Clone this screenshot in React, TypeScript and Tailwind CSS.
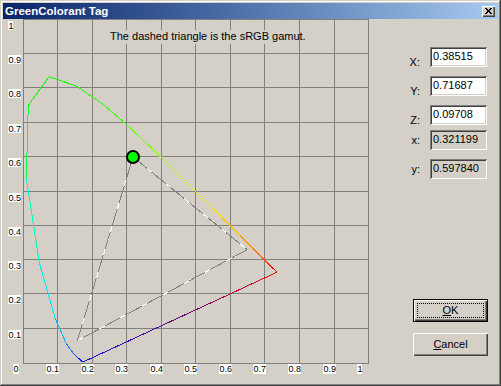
const GRID_X = [23, 57, 92, 126, 161, 195, 230, 264, 299, 334, 368];
const GRID_Y = [363, 328, 293, 259, 225, 191, 156, 122, 87, 53, 19];

// CIE 1931 spectral locus, 10nm steps
const LOCUS: [number, number, number][] = [
  [380, 0.1741, 0.005],
  [390, 0.1738, 0.0049],
  [400, 0.1733, 0.0048],
  [410, 0.1726, 0.0048],
  [420, 0.1714, 0.0051],
  [430, 0.1689, 0.0069],
  [440, 0.1644, 0.0109],
  [450, 0.1566, 0.0177],
  [460, 0.144, 0.0297],
  [470, 0.1241, 0.0578],
  [480, 0.0913, 0.1327],
  [490, 0.0454, 0.295],
  [500, 0.0082, 0.5384],
  [510, 0.0139, 0.7502],
  [520, 0.0743, 0.8338],
  [530, 0.1547, 0.8059],
  [540, 0.2296, 0.7543],
  [550, 0.3016, 0.6923],
  [560, 0.3731, 0.6245],
  [570, 0.4441, 0.5547],
  [580, 0.5125, 0.4866],
  [590, 0.5752, 0.4242],
  [600, 0.627, 0.3725],
  [610, 0.6658, 0.334],
  [620, 0.6915, 0.3083],
  [630, 0.7079, 0.292],
  [640, 0.719, 0.2809],
  [650, 0.726, 0.274],
  [660, 0.73, 0.27],
  [680, 0.7334, 0.2666],
  [700, 0.7347, 0.2653],
];

const px = (x: number) => 23.5 + x * 345;
const py = (y: number) => 363.5 - y * 344;

function wlColor(w: number) {
  let r = 0,
    g = 0,
    b = 0;
  if (w < 440) b = 1;
  else if (w < 490) {
    g = (w - 440) / 50;
    b = 1;
  } else if (w < 510) {
    g = 1;
    b = (510 - w) / 20;
  } else if (w < 580) {
    r = Math.pow((w - 510) / 70, 2);
    g = 1;
  } else if (w < 645) {
    r = 1;
    g = (645 - w) / 65;
  } else r = 1;
  return `rgb(${Math.round(r * 255)},${Math.round(g * 255)},${Math.round(b * 255)})`;
}

const SRGB = {
  r: [px(0.6484), py(0.3309)],
  g: [133, 157],
  b: [px(0.1559), py(0.066)],
};

const labelFont = "'Liberation Sans', Arial, sans-serif";

function Chart() {
  const tri: [number[], number[]][] = [
    [SRGB.b, SRGB.g],
    [SRGB.g, SRGB.r],
    [SRGB.r, SRGB.b],
  ];
  const first = LOCUS[0];
  const last = LOCUS[LOCUS.length - 1];
  return (
    <svg width={372} height={364} viewBox="3 19 372 364" className="block shrink-0">
      <defs>
        <linearGradient
          id="purple"
          gradientUnits="userSpaceOnUse"
          x1={px(first[1])}
          y1={py(first[2])}
          x2={px(last[1])}
          y2={py(last[2])}
        >
          <stop offset="0" stopColor="#1010e0" />
          <stop offset="0.5" stopColor="#600080" />
          <stop offset="1" stopColor="#ff0000" />
        </linearGradient>
      </defs>

      {/* grid */}
      <g stroke="#808080" strokeWidth={1} shapeRendering="crispEdges">
        {GRID_X.map((x) => (
          <line key={'v' + x} x1={x + 0.5} y1={19} x2={x + 0.5} y2={364} />
        ))}
        {GRID_Y.map((y) => (
          <line key={'h' + y} x1={23} y1={y + 0.5} x2={369} y2={y + 0.5} />
        ))}
      </g>

      {/* caption */}
      <rect x={108} y={30} width={190} height={14} fill="#d4d0c8" />
      <text x={110} y={40} fontSize={11} fontFamily={labelFont} fill="#000">
        The dashed triangle is the sRGB gamut.
      </text>

      {/* axis labels */}
      <g fontSize={9} fontFamily={labelFont} fill="#000">
        {GRID_Y.slice(1).map((y, i) => {
          const k = i + 1;
          const t = k === 10 ? '1' : `0.${k}`;
          const w = k === 10 ? 5 : 13;
          return (
            <g key={'yl' + k}>
              <rect x={8} y={y + 2} width={w} height={9} fill="#fff" />
              <text x={8.5} y={y + 9.5}>
                {t}
              </text>
            </g>
          );
        })}
        {GRID_X.slice(1).map((x, i) => {
          const k = i + 1;
          const t = k === 10 ? '1' : `0.${k}`;
          const w = k === 10 ? 5 : 13;
          const left = k === 10 ? 357 : x + 2 - w;
          return (
            <g key={'xl' + k}>
              <rect x={left} y={364} width={w} height={10} fill="#fff" />
              <text x={left + 0.5} y={372}>
                {t}
              </text>
            </g>
          );
        })}
        <rect x={13} y={364} width={6} height={10} fill="#fff" />
        <text x={13.5} y={372}>
          0
        </text>
      </g>

      {/* spectral locus */}
      <g strokeWidth={1} shapeRendering="crispEdges" fill="none">
        {LOCUS.slice(1).map((p, i) => {
          const q = LOCUS[i];
          return (
            <line
              key={'l' + p[0]}
              x1={px(q[1])}
              y1={py(q[2])}
              x2={px(p[1])}
              y2={py(p[2])}
              stroke={wlColor((p[0] + q[0]) / 2)}
            />
          );
        })}
        <line
          x1={px(first[1])}
          y1={py(first[2])}
          x2={px(last[1])}
          y2={py(last[2])}
          stroke="url(#purple)"
        />
      </g>

      {/* sRGB gamut triangle */}
      <g strokeWidth={1} shapeRendering="crispEdges">
        {tri.map(([a, b], i) => (
          <g key={'t' + i}>
            <line x1={a[0]} y1={a[1]} x2={b[0]} y2={b[1]} stroke="#ffffff" />
            <line x1={a[0]} y1={a[1]} x2={b[0]} y2={b[1]} stroke="#808080" strokeDasharray="18 6" />
          </g>
        ))}
      </g>

      {/* colorant point */}
      <circle cx={133} cy={157} r={6} fill="#00ff00" stroke="#000" strokeWidth={2} />
    </svg>
  );
}

function Field({ label, value, readOnly, upper, mt }: { label: string; value: string; readOnly?: boolean; upper?: boolean; mt: string }) {
  return (
    <div className={`flex items-start gap-[10px] h-[20px] ${mt}`}>
      <span className={`leading-[13px] ${upper ? 'mt-[9px]' : 'mt-[4px]'}`}>{label}</span>
      <div
        className={`w-[57px] h-[20px] px-[3px] pt-[3px] leading-[13px] shadow-[inset_1px_1px_0_#808080,inset_-1px_-1px_0_#ffffff,inset_2px_2px_0_#404040,inset_-2px_-2px_0_#d4d0c8] ${
          readOnly ? 'bg-[#d4d0c8]' : 'bg-white'
        }`}
      >
        {value}
      </div>
    </div>
  );
}

export default function App() {
  return (
    <div className="w-[501px] h-[386px] bg-[#d4d0c8] p-[3px] flex flex-col text-[11px] text-black font-['Liberation_Sans',Arial,sans-serif] shadow-[inset_-1px_-1px_0_#404040,inset_1px_1px_0_#d4d0c8,inset_-2px_-2px_0_#808080,inset_2px_2px_0_#ffffff] overflow-hidden">
      <div className="h-[16px] flex items-center justify-between bg-linear-to-r from-[#0a246a] to-[#a6caf0] pl-[2px] pr-[3px]">
        <span className="text-white font-bold text-[11.5px] leading-[16px]">GreenColorant Tag</span>
        <div className="w-[13px] h-[11px] bg-[#d4d0c8] flex items-center justify-center shadow-[inset_1px_1px_0_#ffffff,inset_-1px_-1px_0_#404040,inset_-2px_-2px_0_#808080]">
          <svg width="7" height="6" viewBox="0 0 7 6" shapeRendering="crispEdges">
            <path d="M0 0h2v1h-2zM5 0h2v1h-2zM1 1h2v1h-2zM4 1h2v1h-2zM2 2h3v2h-3zM1 4h2v1h-2zM4 4h2v1h-2zM0 5h2v1h-2zM5 5h2v1h-2z" fill="#000" />
          </svg>
        </div>
      </div>

      <div className="flex flex-1">
        <Chart />
        <div className="flex-1 flex flex-col items-end">
          <div className="flex flex-col items-end pr-[11px]">
            <Field label="X:" value="0.38515" upper mt="mt-[28px]" />
            <Field label="Y:" value="0.71687" upper mt="mt-[9px]" />
            <Field label="Z:" value="0.09708" upper mt="mt-[9px]" />
            <Field label="x:" value="0.321199" readOnly mt="mt-[5px]" />
            <Field label="y:" value="0.597840" readOnly mt="mt-[9px]" />
          </div>
          <div className="flex flex-col pr-[10px] mt-[120px]">
            <button className="w-[75px] h-[23px] border border-black bg-[#d4d0c8] p-[3px] shadow-[inset_1px_1px_0_#ffffff,inset_-1px_-1px_0_#404040,inset_-2px_-2px_0_#808080]">
              <div className="w-full h-full border border-dotted border-black flex items-center justify-center leading-[13px]">
                <span>
                  <span className="underline underline-offset-[1px]">O</span>K
                </span>
              </div>
            </button>
            <button className="mt-[11px] w-[75px] h-[23px] bg-[#d4d0c8] flex items-center justify-center leading-[13px] shadow-[inset_1px_1px_0_#ffffff,inset_-1px_-1px_0_#404040,inset_-2px_-2px_0_#808080]">
              <span>
                <span className="underline underline-offset-[1px]">C</span>ancel
              </span>
            </button>
          </div>
        </div>
      </div>
    </div>
  );
}
